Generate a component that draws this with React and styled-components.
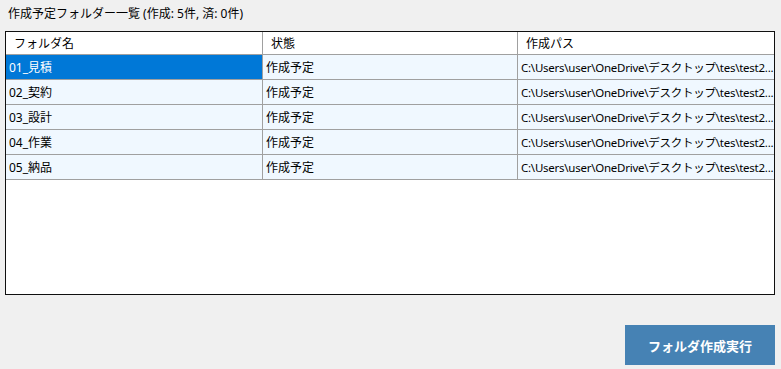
import React from "react";
import styled, { createGlobalStyle } from "styled-components";

const GlobalStyle = createGlobalStyle`
  html, body {
    margin: 0;
    padding: 0;
    background: #f0f0f0;
  }
  body {
    font-family: "Noto Sans", "Noto Sans CJK JP", sans-serif;
    font-size: 12px;
    color: #000;
  }
`;

const Page = styled.div`
  width: 781px;
  height: 369px;
  box-sizing: border-box;
  padding: 5px 6px 4px 5px;
  display: flex;
  flex-direction: column;
  overflow: hidden;
`;

const Title = styled.div`
  height: 20px;
  line-height: 18px;
  padding-left: 3px;
  margin-bottom: 6px;
  white-space: nowrap;
`;

const Grid = styled.div`
  height: 264px;
  box-sizing: border-box;
  border: 1px solid #101010;
  background: #fff;
  display: grid;
  grid-template-columns: 257px 255px 1fr;
  grid-template-rows: 23px;
  grid-auto-rows: 25px;
  align-content: start;
`;

const Cell = styled.div`
  box-sizing: border-box;
  border-right: ${(p) => (p.$last ? "none" : "1px solid #a0a0a0")};
  border-bottom: 1px solid #a0a0a0;
  background: ${(p) =>
    p.$selected ? "#0078d7" : p.$header ? "#ffffff" : "#f0f8ff"};
  color: ${(p) => (p.$selected ? "#ffffff" : "#000")};
  padding-left: ${(p) => (p.$header ? "8px" : "3px")};
  display: flex;
  align-items: center;
  white-space: nowrap;
  overflow: hidden;
  font-size: ${(p) => (p.$small ? "11.5px" : "12px")};
  letter-spacing: ${(p) => (p.$small ? "-0.25px" : "0")};
`;

const Footer = styled.div`
  flex: 1;
  display: flex;
  justify-content: flex-end;
  align-items: flex-start;
  padding-top: 30px;
`;

const RunButton = styled.button`
  width: 150px;
  height: 40px;
  border: none;
  background: #4682b4;
  color: #fff;
  font-family: "Noto Sans", "Noto Sans CJK JP", sans-serif;
  font-size: 13px;
  font-weight: bold;
  cursor: pointer;
`;

const folders = ["01_見積", "02_契約", "03_設計", "04_作業", "05_納品"];
const path = "C:\\Users\\user\\OneDrive\\デスクトップ\\tes\\test2...";

export default function App() {
  return (
    <>
      <GlobalStyle />
      <Page>
        <Title>作成予定フォルダー一覧 (作成: 5件, 済: 0件)</Title>
        <Grid>
          <Cell $header>フォルダ名</Cell>
          <Cell $header>状態</Cell>
          <Cell $header $last>作成パス</Cell>
          {folders.map((name, i) => (
            <React.Fragment key={name}>
              <Cell $selected={i === 0}>{name}</Cell>
              <Cell>作成予定</Cell>
              <Cell $last $small>{path}</Cell>
            </React.Fragment>
          ))}
        </Grid>
        <Footer>
          <RunButton>フォルダ作成実行</RunButton>
        </Footer>
      </Page>
    </>
  );
}
